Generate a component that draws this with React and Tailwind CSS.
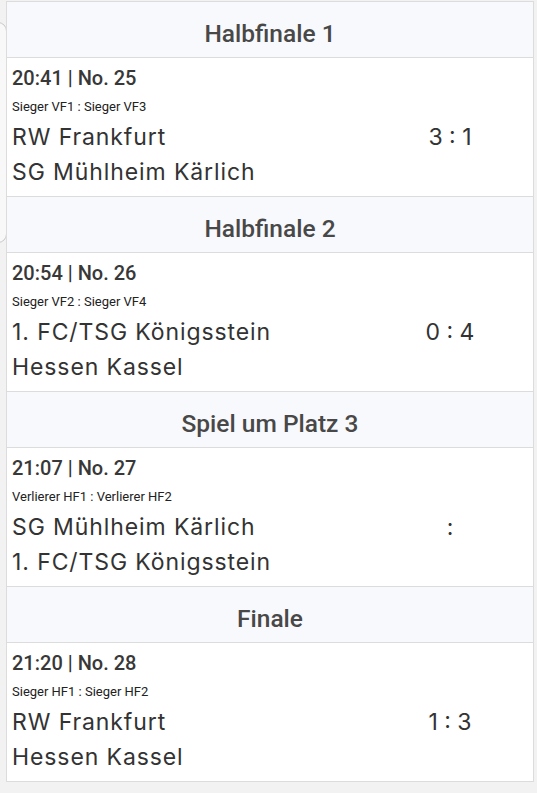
import React from "react";

const sections = [
  { title: "Halbfinale 1", time: "20:41 | No. 25", desc: "Sieger VF1 : Sieger VF3", home: "RW Frankfurt", away: "SG Mühlheim Kärlich", score: "3 : 1" },
  { title: "Halbfinale 2", time: "20:54 | No. 26", desc: "Sieger VF2 : Sieger VF4", home: "1. FC/TSG Königsstein", away: "Hessen Kassel", score: "0 : 4" },
  { title: "Spiel um Platz 3", time: "21:07 | No. 27", desc: "Verlierer HF1 : Verlierer HF2", home: "SG Mühlheim Kärlich", away: "1. FC/TSG Königsstein", score: ":" },
  { title: "Finale", time: "21:20 | No. 28", desc: "Sieger HF1 : Sieger HF2", home: "RW Frankfurt", away: "Hessen Kassel", score: "1 : 3" },
];

const roboto = { fontFamily: "Roboto, 'Liberation Sans', sans-serif" };
const team = { fontFamily: "Inter, 'Open Sans', sans-serif" };

export default function App() {
  return (
    <div className="relative min-h-[793px] w-[537px] overflow-hidden bg-[#f2f2f2] pt-px">
      <div className="absolute left-[-12px] top-[22px] h-[221px] w-[19px] rounded-r-[9px] border border-[#c8c8c8] bg-[#f8f8f8]" />
      <div className="relative ml-[6px] w-[528px] border-x border-b border-[#dcdcdc] bg-white">
        {sections.map((s, i) => (
          <div key={i}>
            <div
              className="border-t border-[#dcdcdc] bg-[#f8f9fc] pb-[8px] pt-[17px] text-center text-[24.5px] font-medium leading-[30px] text-[#484848]"
              style={roboto}
            >
              {s.title}
            </div>
            <div className="border-t border-[#dcdcdc] pb-[6px] pl-[5px] pt-[8px]">
              <div className="text-[20px] font-medium leading-[24px] text-[#383838]" style={roboto}>
                {s.time}
              </div>
              <div className="mt-[7px] text-[13px] leading-[20px] text-[#222]" style={roboto}>
                {s.desc}
              </div>
              <div className="mt-[3px] flex text-[23px] font-normal leading-[35px] text-[#333]" style={team}>
                <div className="flex-1 tracking-[0.9px]">
                  <div>{s.home}</div>
                  <div>{s.away}</div>
                </div>
                <div className="w-[166px] text-center tracking-normal">{s.score}</div>
              </div>
            </div>
          </div>
        ))}
      </div>
    </div>
  );
}
